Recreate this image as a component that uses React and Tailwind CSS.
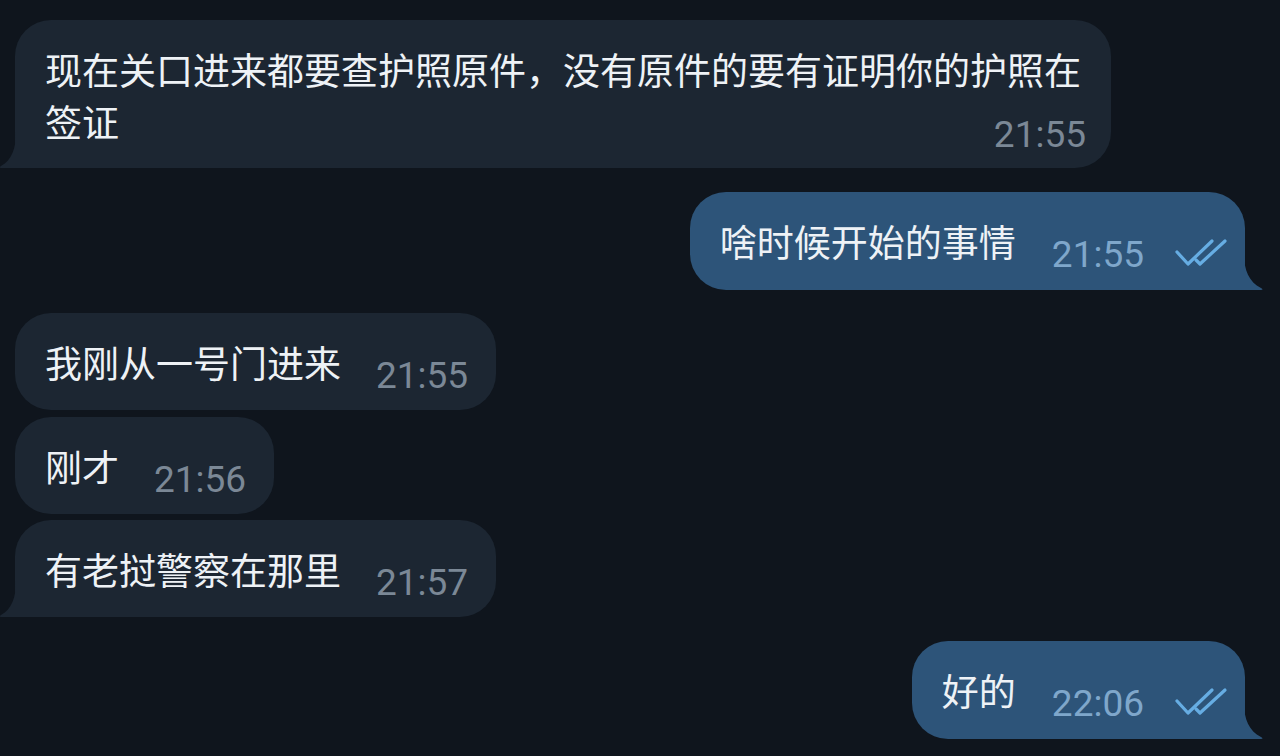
import React from "react";

const cjk = { fontFamily: '"Noto Sans CJK SC", "Noto Sans", sans-serif' };
const num = { fontFamily: 'Roboto, "Noto Sans", sans-serif' };

function Checks() {
  return (
    <svg width="54" height="29" viewBox="0 0 54 29" className="ml-[31px] shrink-0" fill="none" stroke="#66ade3" strokeWidth="3.2" strokeLinecap="round" strokeLinejoin="round">
      <polyline points="2,14 13,26 37,3" />
      <polyline points="21,22 25,26 50,3" />
    </svg>
  );
}

function Time({ t, out, className = "" }) {
  return (
    <span
      style={num}
      className={`flex items-baseline shrink-0 relative top-[14px] text-[37px] leading-[52px] ${out ? "text-[#7fa7cb]" : "text-[#7b8896]"} ${className}`}
    >
      {t}
      {out && <Checks />}
    </span>
  );
}

function TailIn({ color }) {
  return (
    <svg className="absolute left-[-16px] bottom-0" width="17" height="36" viewBox="0 0 17 36">
      <path d="M17,0 C17,16 13,28 2,34 C0,35 1,36 3,36 L17,36 Z" fill={color} />
    </svg>
  );
}

function TailOut({ color }) {
  return (
    <svg className="absolute right-[-19px] bottom-0" width="20" height="36" viewBox="0 0 20 36">
      <path d="M0,0 C0,16 5,28 17,34 C19,35 19,36 17,36 L0,36 Z" fill={color} />
    </svg>
  );
}

const IN = "#1c2632";
const OUT = "#2d5479";

function InBubble({ text, t, tail, className = "" }) {
  return (
    <div className={`self-start ml-[15px] relative ${className}`}>
      <div
        className={`flex items-end bg-[#1c2632] rounded-[36px] ${tail ? "rounded-bl-none" : ""} pl-[30px] pr-[28px] pt-[23px] pb-[22px]`}
      >
        <span style={cjk} className="text-[37px] leading-[52px] text-[#eef2f6] whitespace-nowrap">{text}</span>
        <Time t={t} className="ml-[35px]" />
      </div>
      {tail && <TailIn color={IN} />}
    </div>
  );
}

function OutBubble({ text, t, className = "" }) {
  return (
    <div className={`self-end mr-[35px] relative ${className}`}>
      <div className="flex items-end bg-[#2d5479] rounded-[36px] rounded-br-none pl-[30px] pr-[16px] pt-[23px] pb-[23px]">
        <span style={cjk} className="text-[37px] leading-[52px] text-[#eef2f6] whitespace-nowrap">{text}</span>
        <Time t={t} out className="ml-[36px]" />
      </div>
      <TailOut color={OUT} />
    </div>
  );
}

export default function App() {
  return (
    <div className="w-[1280px] h-[756px] overflow-hidden bg-[#0f151d] flex flex-col pt-[20px]">
      <div className="self-start ml-[15px] relative">
        <div className="w-[1096px] bg-[#1c2632] rounded-[36px] rounded-bl-none pl-[30px] pr-[25px] pt-[23px] pb-[21px] flow-root">
          <p style={cjk} className="text-[37px] leading-[52px] text-[#eef2f6]">
            现在关口进来都要查护照原件，没有原件的要有证明你的护照在签证
            <span style={num} className="float-right relative top-[14px] text-[37px] leading-[52px] text-[#7b8896]">21:55</span>
          </p>
        </div>
        <TailIn color={IN} />
      </div>

      <OutBubble text="啥时候开始的事情" t="21:55" className="mt-[24px]" />

      <InBubble text="我刚从一号门进来" t="21:55" className="mt-[23px]" />
      <InBubble text="刚才" t="21:56" className="mt-[7px]" />
      <InBubble text="有老挝警察在那里" t="21:57" tail className="mt-[6px]" />

      <OutBubble text="好的" t="22:06" className="mt-[24px]" />
    </div>
  );
}
